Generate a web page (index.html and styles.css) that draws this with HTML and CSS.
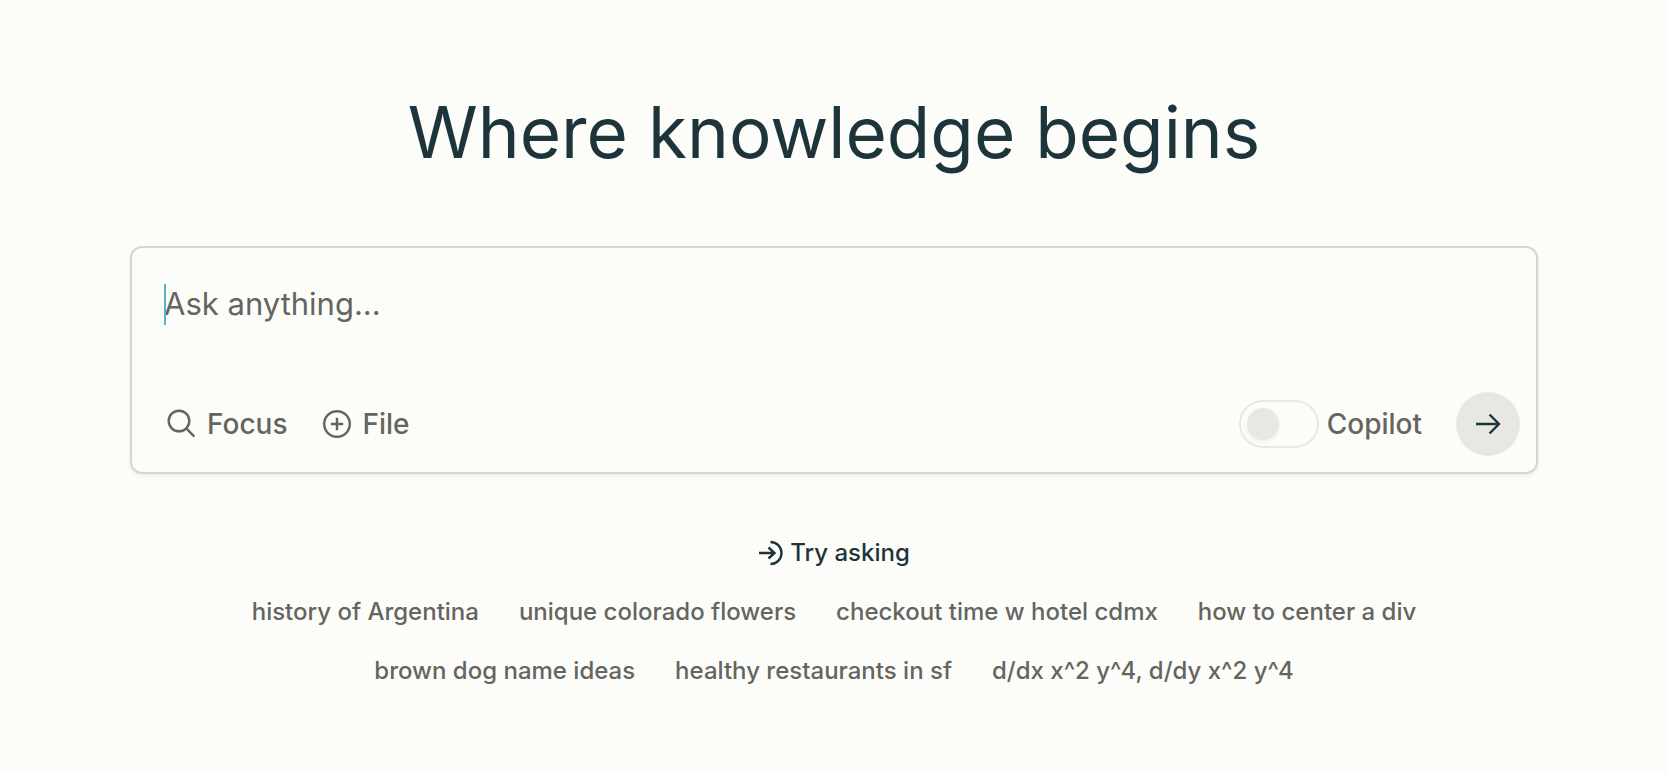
FILE: index.html
```
<!DOCTYPE html>
<html lang="en">
<head>
  <meta charset="UTF-8">
  <meta name="viewport" content="width=device-width, initial-scale=1">
  <title>Where knowledge begins</title>
  <link rel="stylesheet" href="styles.css">
</head>
<body>
<main class="home">
  <h1 class="title">Where knowledge begins</h1>

  <form class="ask">
    <div class="ask-field">
      <textarea class="ask-input" rows="1" placeholder="Ask anything..." aria-label="Ask anything"></textarea>
    </div>
    <div class="ask-bar">
      <button type="button" class="tool">
        <svg class="icon" viewBox="0 0 32 32">
          <circle cx="15" cy="13" r="10.300"/>
          <path d="M22.300 20.300L30.300 28.600"/>
        </svg>
        Focus
      </button>
      <button type="button" class="tool">
        <svg class="icon" viewBox="0 0 32 32">
          <circle cx="17" cy="16" r="12.800"/>
          <path d="M17 9.800v12.400M10.800 16h12.400"/>
        </svg>
        File
      </button>
      <label class="copilot">
        <input type="checkbox" class="switch">
        Copilot
      </label>
      <button type="submit" class="send" aria-label="Submit">
        <svg class="icon" viewBox="0 0 32 32">
          <path d="M4 16h23M17.500 6.500l9.500 9.500-9.500 9.500"/>
        </svg>
      </button>
    </div>
  </form>

  <section class="try">
    <h2 class="try-title">
      <svg class="icon-try" viewBox="0 0 26 26">
        <path d="M1 13h15.500M10.500 7.500l6 5.500-6 5.500M12.500 2a11 11 0 0 1 0 22"/>
      </svg>
      Try asking
    </h2>
    <div class="try-list">
      <a href="#">history of Argentina</a>
      <a href="#">unique colorado flowers</a>
      <a href="#">checkout time w hotel cdmx</a>
      <a href="#">how to center a div</a>
      <a href="#">brown dog name ideas</a>
      <a href="#">healthy restaurants in sf</a>
      <a href="#">d/dx x^2 y^4, d/dy x^2 y^4</a>
    </div>
  </section>
</main>
</body>
</html>
```
FILE: styles.css
```
*{
  margin: 0;
  padding: 0;
  box-sizing: border-box;
}
body{
  background-color: #fcfdf9;
  color: #64655f;
  font-family: Inter, "Liberation Sans", sans-serif;
}
button, textarea{
  font-family: inherit;
  color: inherit;
  background: none;
  border: none;
}
svg{
  fill: none;
  stroke: currentColor;
}
.home{
  max-width: 1472px;
  margin: 0 auto;
  padding: 88px 32px;
}
.title{
  margin-bottom: 70px;
  font-size: 71px;
  line-height: 88px;
  font-weight: 400;
  text-align: center;
  color: #1e343b;
}
.ask{
  border: 2px solid #d5d6cf;
  border-radius: 12px;
  box-shadow: 0 2px 4px rgba(0, 0, 0, .06);
}
.ask-field{
  position: relative;
  padding: 36px 32px 0;
}
/* text caret */
.ask-field:before{
  content: '';
  position: absolute;
  top: 36px;
  left: 32px;
  width: 2px;
  height: 41px;
  background-color: #57b3c9;
}
.ask-input{
  display: block;
  width: 100%;
  height: 92px;
  font-size: 31px;
  line-height: 40px;
  resize: none;
  outline: none;
}
.ask-input::placeholder{
  color: #64655f;
}
.ask-bar{
  display: flex;
  align-items: center;
  padding: 16px 16px 16px 32px;
}
.tool{
  display: flex;
  align-items: center;
  gap: 11px;
  margin-right: 32px;
  font-size: 28px;
  line-height: 40px;
  font-weight: 500;
}
.icon{
  width: 32px;
  height: 32px;
  stroke-width: 2.4;
}
.copilot{
  display: flex;
  align-items: center;
  gap: 8px;
  margin-left: auto;
  font-size: 28px;
  line-height: 40px;
  font-weight: 500;
}
.switch{
  appearance: none;
  width: 80px;
  height: 48px;
  padding: 6px;
  border: 2px solid #e7e8e2;
  border-radius: 24px;
}
.switch:before{
  content: '';
  display: block;
  width: 32px;
  height: 32px;
  border-radius: 50%;
  background-color: #e7e8e2;
  box-shadow: 0 2px 4px rgba(0, 0, 0, .06);
}
.switch:checked:before{
  margin-left: auto;
}
.send{
  display: flex;
  align-items: center;
  justify-content: center;
  width: 64px;
  height: 64px;
  margin-left: 34px;
  border-radius: 50%;
  background-color: #e7e8e2;
  color: #1e343b;
}
.try{
  margin-top: 63px;
  font-size: 24px;
  line-height: 32px;
}
.try-title{
  display: flex;
  align-items: center;
  justify-content: center;
  gap: 6px;
  font-size: 24px;
  font-weight: 500;
  color: #1e343b;
}
.icon-try{
  width: 26px;
  height: 26px;
  stroke-width: 2.4;
}
.try-list{
  display: flex;
  flex-wrap: wrap;
  justify-content: center;
  gap: 27px 40px;
  max-width: 1240px;
  margin: 27px auto 0;
}
.try-list a{
  font-weight: 500;
  color: inherit;
  text-decoration: none;
}
```
